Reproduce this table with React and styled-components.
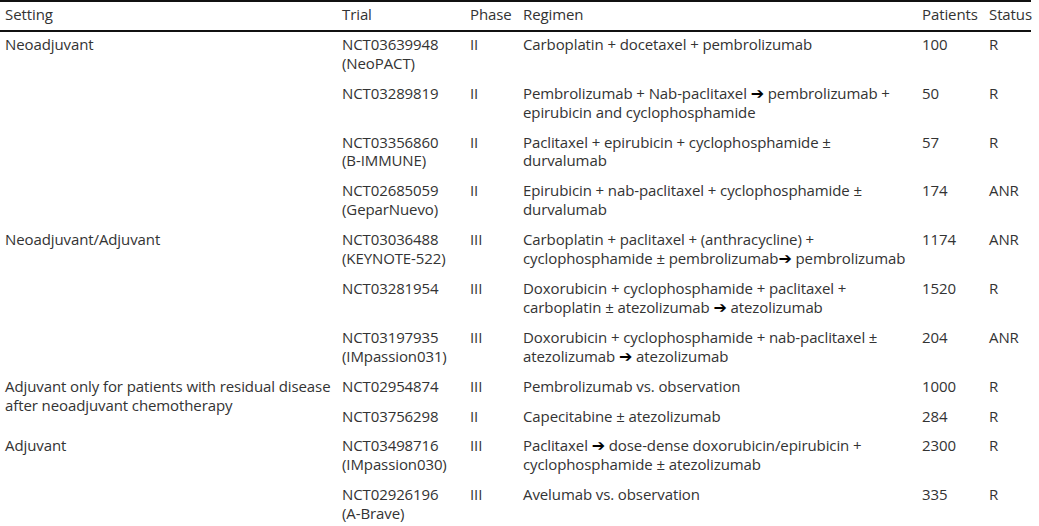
import React from 'react'
import styled, { createGlobalStyle } from 'styled-components'

const GlobalStyle = createGlobalStyle`
  body {
    margin: 0;
    background: #fff;
    font-family: "Open Sans", "Noto Sans", sans-serif;
    color: #333;
  }
`

const Arrow = () => <ArrowGlyph>➔</ArrowGlyph>

const groups = [
  {
    setting: 'Neoadjuvant',
    trials: [
      { id: 'NCT03639948', alias: 'NeoPACT', phase: 'II', regimen: ['Carboplatin + docetaxel + pembrolizumab'], n: '100', status: 'R' },
      { id: 'NCT03289819', phase: 'II', regimen: ['Pembrolizumab + Nab-paclitaxel ', <Arrow key='a' />, ' pembrolizumab + epirubicin and cyclophosphamide'], n: '50', status: 'R' },
      { id: 'NCT03356860', alias: 'B-IMMUNE', phase: 'II', regimen: ['Paclitaxel + epirubicin + cyclophosphamide ± durvalumab'], n: '57', status: 'R' },
      { id: 'NCT02685059', alias: 'GeparNuevo', phase: 'II', regimen: ['Epirubicin + nab-paclitaxel + cyclophosphamide ± durvalumab'], n: '174', status: 'ANR' }
    ]
  },
  {
    setting: 'Neoadjuvant/Adjuvant',
    trials: [
      { id: 'NCT03036488', alias: 'KEYNOTE-522', phase: 'III', regimen: ['Carboplatin + paclitaxel + (anthracycline) + cyclophosphamide ± pembrolizumab', <Arrow key='a' />, ' pembrolizumab'], n: '1174', status: 'ANR' },
      { id: 'NCT03281954', phase: 'III', regimen: ['Doxorubicin + cyclophosphamide + paclitaxel + carboplatin ± atezolizumab ', <Arrow key='a' />, ' atezolizumab'], n: '1520', status: 'R' },
      { id: 'NCT03197935', alias: 'IMpassion031', phase: 'III', regimen: ['Doxorubicin + cyclophosphamide + nab-paclitaxel ± atezolizumab ', <Arrow key='a' />, ' atezolizumab'], n: '204', status: 'ANR' }
    ]
  },
  {
    setting: 'Adjuvant only for patients with residual disease after neoadjuvant chemotherapy',
    trials: [
      { id: 'NCT02954874', phase: 'III', regimen: ['Pembrolizumab vs. observation'], n: '1000', status: 'R' },
      { id: 'NCT03756298', phase: 'II', regimen: ['Capecitabine ± atezolizumab'], n: '284', status: 'R' }
    ]
  },
  {
    setting: 'Adjuvant',
    trials: [
      { id: 'NCT03498716', alias: 'IMpassion030', phase: 'III', regimen: ['Paclitaxel ', <Arrow key='a' />, ' dose-dense doxorubicin/epirubicin + cyclophosphamide ± atezolizumab'], n: '2300', status: 'R' },
      { id: 'NCT02926196', alias: 'A-Brave', phase: 'III', regimen: ['Avelumab vs. observation'], n: '335', status: 'R' }
    ]
  }
]

const App = () => (
  <>
    <GlobalStyle />
    <Table>
      <colgroup>
        <col style={{ width: 337 }} />
        <col style={{ width: 128 }} />
        <col style={{ width: 53 }} />
        <col style={{ width: 399 }} />
        <col style={{ width: 67 }} />
        <col />
      </colgroup>
      <thead>
        <tr>
          <Th>Setting</Th>
          <Th>Trial</Th>
          <Th>Phase</Th>
          <Th>Regimen</Th>
          <Th>Patients</Th>
          <Th>Status</Th>
        </tr>
      </thead>
      <tbody>
        {groups.map(g => g.trials.map((t, i) => (
          <tr key={t.id}>
            {i === 0 && <Td rowSpan={g.trials.length}>{g.setting}</Td>}
            <Td>{t.id}{t.alias && <><br />({t.alias})</>}</Td>
            <Td>{t.phase}</Td>
            <Td>{t.regimen}</Td>
            <Td>{t.n}</Td>
            <Td>{t.status}</Td>
          </tr>
        )))}
      </tbody>
    </Table>
  </>
)

// Styles
const Table = styled.table`
  width: 1031px;
  table-layout: fixed;
  border-collapse: collapse;
  font-size: 15px;
  line-height: 18.9px;
  letter-spacing: -0.1px;
  border-top: 2px solid #111;
`

const Th = styled.th`
  text-align: left;
  font-weight: 400;
  padding: 3px 5px 6px 5px;
  border-bottom: 2px solid #111;
  white-space: nowrap;
`

const Td = styled.td`
  vertical-align: top;
  padding: 3px 5px 8px 5px;
`

const ArrowGlyph = styled.span`
  font-family: "DejaVu Sans", sans-serif;
  color: #000;
  font-weight: 700;
  font-size: 16px;
  line-height: 1;
`

export default App
